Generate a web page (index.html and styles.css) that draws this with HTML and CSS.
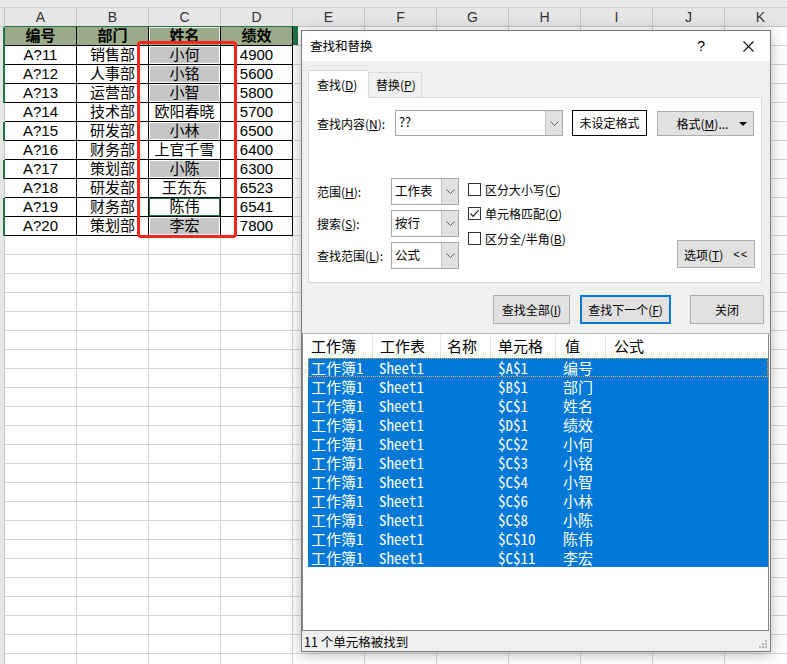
FILE: index.html
```html
<!DOCTYPE html>
<html lang="zh-CN">
<head>
<meta charset="utf-8">
<title>查找和替换</title>
<link rel="stylesheet" href="styles.css">
</head>
<body>
<div class="sheet">
  <div class="topstrip"></div>
  <div class="colhead">
    <div class="corner"></div>
    <div class="ch">A</div><div class="ch">B</div><div class="ch">C</div><div class="ch">D</div>
    <div class="ch">E</div><div class="ch">F</div><div class="ch">G</div><div class="ch">H</div>
    <div class="ch">I</div><div class="ch">J</div><div class="ch">K</div>
  </div>
  <div class="grid">
    <div class="table">
      <div class="row first mark"><div class="rh"></div><div class="c hdr">编号</div><div class="c hdr">部门</div><div class="c hdr hdr-sel">姓名</div><div class="c hdr">绩效</div></div>
      <div class="row mark"><div class="rh"></div><div class="c">A?11</div><div class="c">销售部</div><div class="c sel">小何</div><div class="c">4900</div></div>
      <div class="row mark"><div class="rh"></div><div class="c">A?12</div><div class="c">人事部</div><div class="c sel">小铭</div><div class="c">5600</div></div>
      <div class="row mark"><div class="rh"></div><div class="c">A?13</div><div class="c">运营部</div><div class="c sel">小智</div><div class="c">5800</div></div>
      <div class="row"><div class="rh"></div><div class="c">A?14</div><div class="c">技术部</div><div class="c">欧阳春晓</div><div class="c">5700</div></div>
      <div class="row mark"><div class="rh"></div><div class="c">A?15</div><div class="c">研发部</div><div class="c sel">小林</div><div class="c">6500</div></div>
      <div class="row"><div class="rh"></div><div class="c">A?16</div><div class="c">财务部</div><div class="c">上官千雪</div><div class="c">6400</div></div>
      <div class="row mark"><div class="rh"></div><div class="c">A?17</div><div class="c">策划部</div><div class="c sel">小陈</div><div class="c">6300</div></div>
      <div class="row"><div class="rh"></div><div class="c">A?18</div><div class="c">研发部</div><div class="c">王东东</div><div class="c">6523</div></div>
      <div class="row mark"><div class="rh"></div><div class="c">A?19</div><div class="c">财务部</div><div class="c act">陈伟</div><div class="c">6541</div></div>
      <div class="row mark"><div class="rh"></div><div class="c">A?20</div><div class="c">策划部</div><div class="c sel">李宏</div><div class="c">7800</div></div>
    </div>
    <div class="redbox"></div>
  </div>
</div>

<div class="dialog">
  <div class="titlebar">
    <span class="title">查找和替换</span>
    <span class="help">?</span>
    <svg class="close" width="11" height="11" viewBox="0 0 11 11"><path d="M0.5 0.5 L10.5 10.5 M10.5 0.5 L0.5 10.5" stroke="#111" stroke-width="1.1" fill="none"/></svg>
  </div>
  <div class="dbody">
    <div class="tabs">
      <div class="tab active">查找(<u>D</u>)</div>
      <div class="tab">替换(<u>P</u>)</div>
    </div>
    <div class="panel">
      <div class="findrow">
        <span class="flabel">查找内容(<u>N</u>):</span>
        <div class="combo wide"><span class="val">??</span><span class="drop"><svg width="9" height="5" viewBox="0 0 9 5"><path d="M0.5 0.5 L4.5 4.5 L8.5 0.5" stroke="#606060" fill="none"/></svg></span></div>
        <div class="fmtbox">未设定格式</div>
        <div class="btn fmtbtn"><span>格式(<u>M</u>)...</span><svg width="8" height="4" viewBox="0 0 8 4"><path d="M0 0 H8 L4 4 Z" fill="#000"/></svg></div>
      </div>
      <div class="opts">
        <div class="selcol">
          <div class="selrow"><span class="slabel">范围(<u>H</u>):</span><div class="combo small"><span class="val">工作表</span><span class="drop"><svg width="9" height="5" viewBox="0 0 9 5"><path d="M0.5 0.5 L4.5 4.5 L8.5 0.5" stroke="#606060" fill="none"/></svg></span></div></div>
          <div class="selrow"><span class="slabel">搜索(<u>S</u>):</span><div class="combo small"><span class="val">按行</span><span class="drop"><svg width="9" height="5" viewBox="0 0 9 5"><path d="M0.5 0.5 L4.5 4.5 L8.5 0.5" stroke="#606060" fill="none"/></svg></span></div></div>
          <div class="selrow"><span class="slabel">查找范围(<u>L</u>):</span><div class="combo small"><span class="val">公式</span><span class="drop"><svg width="9" height="5" viewBox="0 0 9 5"><path d="M0.5 0.5 L4.5 4.5 L8.5 0.5" stroke="#606060" fill="none"/></svg></span></div></div>
        </div>
        <div class="chkcol">
          <div class="chk"><span class="box"></span>区分大小写(<u>C</u>)</div>
          <div class="chk"><span class="box"><svg width="11" height="11" viewBox="0 0 11 11"><path d="M1.5 5.5 L4.2 8.3 L9.6 2.2" stroke="#222" stroke-width="1.2" fill="none"/></svg></span>单元格匹配(<u>O</u>)</div>
          <div class="chk"><span class="box"></span>区分全/半角(<u>B</u>)</div>
        </div>
        <div class="btn optbtn"><span>选项(<u>T</u>)</span><span class="lt">&lt;&lt;</span></div>
      </div>
    </div>
    <div class="actions">
      <div class="btn b-all">查找全部(<u>I</u>)</div>
      <div class="btn b-next">查找下一个(<u>F</u>)</div>
      <div class="btn b-close">关闭</div>
    </div>
    <div class="list">
      <div class="lhead">
        <div class="h1">工作簿</div><div class="h2">工作表</div><div class="h3">名称</div><div class="h4">单元格</div><div class="h5">值</div><div class="h6">公式</div>
      </div>
      <div class="lrows">
        <div class="lr focus"><span class="w1">工作簿1</span><span class="w2">Sheet1</span><span class="w4">$A$1</span><span class="w5">编号</span></div>
        <div class="lr"><span class="w1">工作簿1</span><span class="w2">Sheet1</span><span class="w4">$B$1</span><span class="w5">部门</span></div>
        <div class="lr"><span class="w1">工作簿1</span><span class="w2">Sheet1</span><span class="w4">$C$1</span><span class="w5">姓名</span></div>
        <div class="lr"><span class="w1">工作簿1</span><span class="w2">Sheet1</span><span class="w4">$D$1</span><span class="w5">绩效</span></div>
        <div class="lr"><span class="w1">工作簿1</span><span class="w2">Sheet1</span><span class="w4">$C$2</span><span class="w5">小何</span></div>
        <div class="lr"><span class="w1">工作簿1</span><span class="w2">Sheet1</span><span class="w4">$C$3</span><span class="w5">小铭</span></div>
        <div class="lr"><span class="w1">工作簿1</span><span class="w2">Sheet1</span><span class="w4">$C$4</span><span class="w5">小智</span></div>
        <div class="lr"><span class="w1">工作簿1</span><span class="w2">Sheet1</span><span class="w4">$C$6</span><span class="w5">小林</span></div>
        <div class="lr"><span class="w1">工作簿1</span><span class="w2">Sheet1</span><span class="w4">$C$8</span><span class="w5">小陈</span></div>
        <div class="lr"><span class="w1">工作簿1</span><span class="w2">Sheet1</span><span class="w4">$C$10</span><span class="w5">陈伟</span></div>
        <div class="lr"><span class="w1">工作簿1</span><span class="w2">Sheet1</span><span class="w4">$C$11</span><span class="w5">李宏</span></div>
      </div>
    </div>
    <div class="status">
      <span>11 个单元格被找到</span>
      <svg class="grip" width="9" height="9" viewBox="0 0 9 9"><g fill="#b4b4b4"><rect x="6" y="0" width="2" height="2"/><rect x="3" y="3" width="2" height="2"/><rect x="6" y="3" width="2" height="2"/><rect x="0" y="6" width="2" height="2"/><rect x="3" y="6" width="2" height="2"/><rect x="6" y="6" width="2" height="2"/></g></svg>
    </div>
  </div>
</div>
</body>
</html>
```

FILE: styles.css
```css
* { box-sizing: border-box; }
html, body { margin: 0; padding: 0; }
body {
  width: 787px;
  height: 664px;
  overflow: hidden;
  position: relative;
  background: #fff;
  font-family: "Liberation Sans", "Noto Sans CJK SC", sans-serif;
  color: #000;
}

/* ---------- spreadsheet ---------- */
.sheet {
  height: 664px;
  display: flex;
  flex-direction: column;
}
.topstrip {
  height: 8px;
  flex: none;
  background: #e9e9e9;
  border-bottom: 1px solid #d2d2d2;
}
.colhead {
  height: 19px;
  flex: none;
  display: flex;
  background: #e6e6e6;
  border-bottom: 1px solid #c3c3c3;
  overflow: hidden;
}
.corner {
  width: 5px;
  flex: none;
  border-right: 1px solid #c3c3c3;
}
.ch {
  width: 72px;
  flex: none;
  border-right: 1px solid #c6c6c6;
  text-align: center;
  font-size: 14px;
  line-height: 18px;
  color: #333;
}
.grid {
  flex: 1;
  position: relative;
  background:
    linear-gradient(to right, #e6e6e6 0 4px, #c6c6c6 4px 5px, transparent 5px) 0 0 / 5px 100% no-repeat,
    linear-gradient(to right, transparent 71px, #d4d4d4 71px) 5px 0 / 72px 100%,
    linear-gradient(to bottom, transparent 18px, #d4d4d4 18px) 0 0 / 100% 19px,
    #fff;
}
.table { width: 293px; }
.row {
  display: flex;
  height: 19px;
}
.row.first { box-shadow: 5px -1px 0 #217346; }
.rh { width: 5px; flex: none; }
.row.mark .rh {
  background: linear-gradient(to right, transparent 3px, #217346 3px 5px);
}
.c {
  width: 72px;
  flex: none;
  height: 19px;
  border-right: 1px solid #000;
  border-bottom: 1px solid #000;
  background: #fff;
  text-align: center;
  font-size: 15px;
  line-height: 18px;
  white-space: nowrap;
}
.c.hdr {
  background: #9aab89;
  font-weight: bold;
}
.c.hdr-sel { box-shadow: inset 1px 1px 0 #e8eee2, inset -1px 0 0 #e8eee2; }
.c.sel {
  background: #c6c6c6;
  box-shadow: inset 0 0 0 1px #fff;
}
.c.act { box-shadow: inset 0 0 0 1px #217346; }
.redbox {
  position: absolute;
  left: 137px;
  top: 14px;
  width: 100px;
  height: 197px;
  border: 3px solid #f3281c;
  border-radius: 4px;
}

/* ---------- dialog ---------- */
.dialog {
  position: absolute;
  left: 301px;
  top: 30px;
  width: 470px;
  height: 622px;
  border: 1px solid #7b7b7b;
  background: #f0f0f0;
  box-shadow: 0 2px 14px rgba(0, 0, 0, 0.28);
  display: flex;
  flex-direction: column;
  font-family: "Noto Sans CJK SC", "Liberation Sans", sans-serif;
  font-size: 12px;
  color: #000;
}
.dialog u { text-decoration: underline; text-underline-offset: 1px; }
.titlebar {
  height: 30px;
  flex: none;
  background: #fff;
  display: flex;
  align-items: center;
  padding-left: 8px;
}
.title { font-size: 12.5px; line-height: 16px; }
.help {
  margin-left: auto;
  font-size: 14px;
  font-family: "Liberation Sans", sans-serif;
  margin-right: 38px;
}
.close { margin-right: 16px; }

.dbody {
  flex: 1;
  display: flex;
  flex-direction: column;
}
.tabs {
  display: flex;
  align-items: flex-start;
  height: 27px;
  margin-top: 9px;
  padding-left: 6px;
  position: relative;
  z-index: 1;
}
.tab {
  height: 25px;
  margin-top: 2px;
  padding: 0 0 0 7px;
  width: 54px;
  border: 1px solid #d9d9d9;
  border-bottom: none;
  background: #f0f0f0;
  line-height: 24px;
  white-space: nowrap;
}
.tab.active {
  width: 60px;
  height: 28px;
  margin-top: 0;
  background: #fff;
  padding-left: 8px;
  line-height: 28px;
  border-right: none;
}
.panel {
  height: 186px;
  margin: 0 8px 0 6px;
  background: #fff;
  border: 1px solid #d9d9d9;
  padding: 12px 6px 0 8px;
}
.findrow {
  display: flex;
  align-items: center;
  height: 26px;
}
.flabel { width: 78px; flex: none; }
.combo {
  display: flex;
  background: #fff;
  border: 1px solid #a8a8a8;
  height: 26px;
}
.combo.wide { width: 168px; }
.combo .val {
  flex: 1;
  padding-left: 3px;
  line-height: 22px;
  font-size: 12.5px;
}
.combo .drop {
  width: 17px;
  flex: none;
  background: #e1e1e1;
  border-left: 1px solid #c4c4c4;
  display: flex;
  align-items: center;
  justify-content: center;
}
.fmtbox {
  width: 75px;
  height: 26px;
  margin-left: 9px;
  border: 1px solid #000;
  background: #fff;
  text-align: center;
  line-height: 23px;
}
.btn {
  background: #e1e1e1;
  border: 1px solid #adadad;
  display: flex;
  align-items: center;
  justify-content: center;
  white-space: nowrap;
}
.fmtbtn {
  width: 97px;
  height: 25px;
  margin-left: 10px;
  position: relative;
  padding-right: 6px;
}
.fmtbtn svg { position: absolute; right: 6px; top: 10px; }

.opts {
  display: flex;
  align-items: flex-end;
  margin-top: 42px;
}
.selcol {
  display: flex;
  flex-direction: column;
  gap: 5px;
}
.selrow {
  display: flex;
  align-items: center;
  height: 27px;
}
.slabel { width: 74px; flex: none; }
.combo.small { width: 68px; height: 27px; }
.combo.small .val { line-height: 24px; }
.chkcol {
  align-self: flex-start;
  margin-left: 9px;
  margin-top: -1px;
  display: flex;
  flex-direction: column;
}
.chk {
  height: 24.5px;
  display: flex;
  align-items: center;
}
.chk .box {
  width: 13px;
  height: 13px;
  border: 1px solid #333;
  background: #fff;
  margin-right: 4px;
  display: flex;
  align-items: center;
  justify-content: center;
}
.optbtn {
  margin-left: auto;
  width: 78px;
  height: 28px;
  margin-bottom: 1px;
  gap: 10px;
}
.optbtn .lt { font-family: "Liberation Sans", sans-serif; letter-spacing: 1px; font-size: 11px; }

.actions {
  display: flex;
  justify-content: flex-end;
  padding-right: 6px;
  margin-top: 12px;
  height: 29px;
}
.actions .btn { height: 29px; }
.b-all { width: 77px; }
.b-next {
  width: 91px;
  margin-left: 10px;
  border: 2px solid #0078d7;
}
.b-close { width: 74px; margin-left: 19px; }

.list {
  height: 298px;
  margin-top: 9px;
  margin-right: 1px;
  background: #fff;
  border: 1px solid #828790;
  border-top-color: #bdbdbd;
}
.lhead {
  display: flex;
  height: 24px;
  font-size: 15px;
  line-height: 24px;
}
.lhead > div {
  border-right: 1px solid #e5e5e5;
  white-space: nowrap;
}
.h1 { width: 70px; padding-left: 8px; }
.h2 { width: 68px; padding-left: 7px; }
.h3 { width: 50px; padding-left: 6px; }
.h4 { width: 65px; padding-left: 7px; }
.h5 { width: 50px; padding-left: 9px; }
.lhead > .h6 { border-right: none; padding-left: 8px; }
.lrows {
  margin-left: 5px;
  font-family: "Noto Sans Mono CJK SC", "Liberation Mono", monospace;
  font-size: 15px;
  color: #fff;
}
.lr {
  display: flex;
  height: 19px;
  line-height: 19px;
  background: #0078d7;
  white-space: nowrap;
}
.lr.focus { outline: 1px dotted #f0a04a; outline-offset: -1px; }
.lr span { padding-left: 3px; }
.w1 { width: 68px; }
.w2 { width: 119px; }
.w4 { width: 65px; }

.status {
  height: 20px;
  display: flex;
  align-items: center;
  padding-left: 2px;
  position: relative;
  font-size: 12.5px;
}
.grip { position: absolute; right: 2px; bottom: 2px; }
```
